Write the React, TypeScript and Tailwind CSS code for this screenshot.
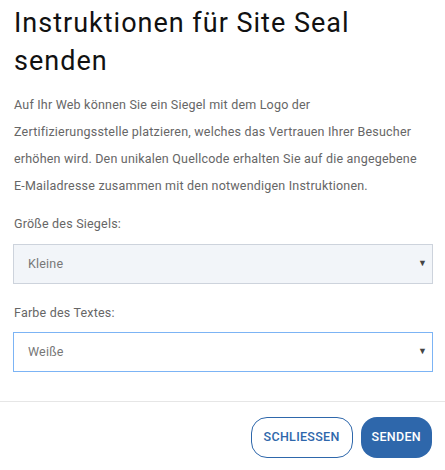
import { useState } from 'react';

const sizes = ['Kleine', 'Mittlere', 'Große'];
const colors = ['Weiße', 'Schwarze'];

export default function App() {
  const [size, setSize] = useState('Kleine');
  const [color, setColor] = useState('Weiße');

  return (
    <div className="w-[445px] h-[470px] bg-white font-['Roboto',sans-serif]">
      <div className="pl-[13px] pr-[12px] pt-[4px]">
        <h1 className="ml-[1px] max-w-[370px] text-[27px] leading-[38px] tracking-[1px] text-[#111] font-normal">
          Instruktionen für Site Seal senden
        </h1>
        <p className="ml-[1px] mt-[11px] whitespace-nowrap text-[12.5px] leading-[27px] tracking-[0.2px] text-[#666]">
          Auf Ihr Web können Sie ein Siegel mit dem Logo der<br />
          Zertifizierungsstelle platzieren, welches das Vertrauen Ihrer Besucher<br />
          erhöhen wird. Den unikalen Quellcode erhalten Sie auf die angegebene<br />
          E-Mailadresse zusammen mit den notwendigen Instruktionen.
        </p>

        <label className="ml-[1px] block mt-[17px] text-[12.5px] leading-[16px] tracking-[0.2px] text-[#666]">Größe des Siegels:</label>
        <div className="relative mt-[12px]">
          <select
            value={size}
            onChange={e => setSize(e.target.value)}
            className="w-full h-[40px] appearance-none bg-[#f2f5f9] border border-[#cdd3dc] pl-[14px] text-[12.5px] tracking-[0.2px] text-[#777] outline-none"
          >
            {sizes.map(s => <option key={s}>{s}</option>)}
          </select>
          <span className="pointer-events-none absolute right-[6px] top-[13px] text-[9px] text-[#444]">▼</span>
        </div>

        <label className="ml-[1px] block mt-[21px] text-[12.5px] leading-[16px] tracking-[0.2px] text-[#666]">Farbe des Textes:</label>
        <div className="relative mt-[11px]">
          <select
            value={color}
            onChange={e => setColor(e.target.value)}
            className="w-full h-[40px] appearance-none bg-white border border-[#7cb4f5] pl-[14px] text-[12.5px] tracking-[0.2px] text-[#777] outline-none"
          >
            {colors.map(c => <option key={c}>{c}</option>)}
          </select>
          <span className="pointer-events-none absolute right-[6px] top-[13px] text-[9px] text-[#444]">▼</span>
        </div>
      </div>

      <div className="mt-[29px] border-t border-[#e6e6e6] flex justify-end gap-[8px] pt-[15px] pr-[13px]">
        <button className="h-[41px] px-[12px] rounded-[16px] border border-[#2e67ab] text-[#2e67ab] text-[12.5px] font-medium tracking-[0.3px]">
          SCHLIESSEN
        </button>
        <button className="h-[41px] px-[11px] rounded-[16px] bg-[#2e67ab] text-white text-[12.5px] font-medium tracking-[0.3px]">
          SENDEN
        </button>
      </div>
    </div>
  );
}
